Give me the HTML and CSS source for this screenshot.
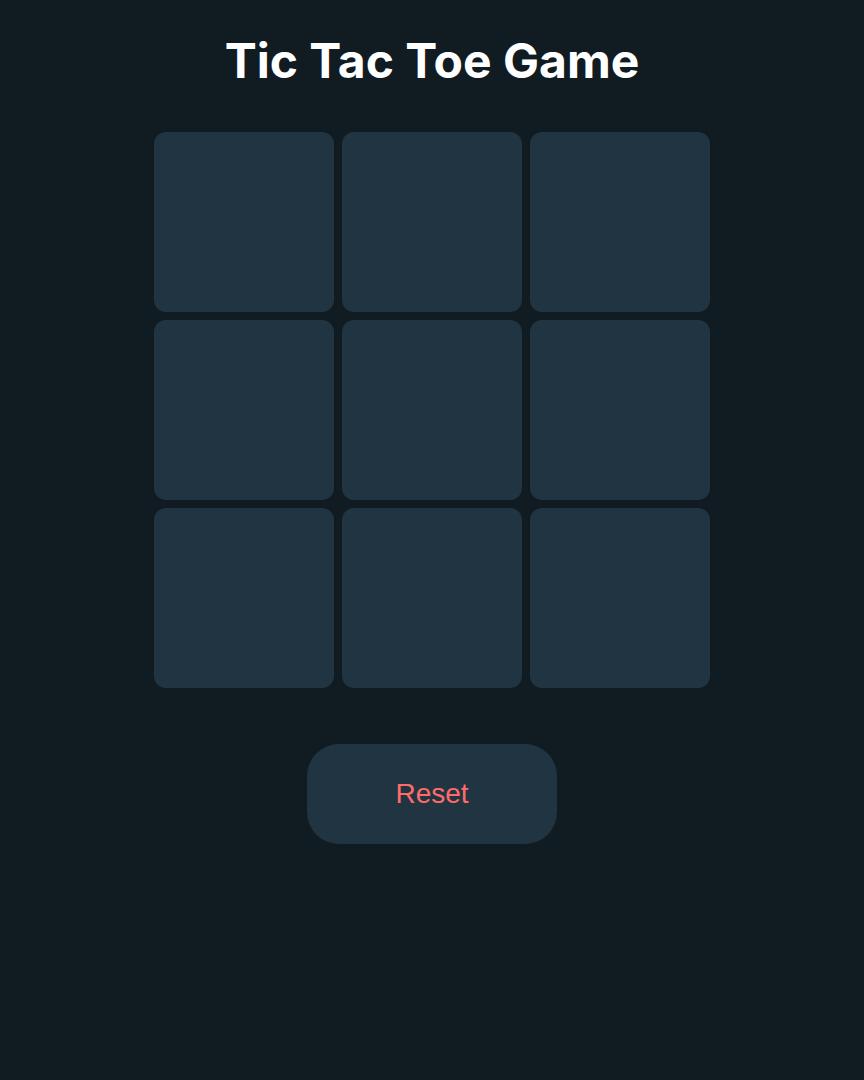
FILE: index.html
```html
<!DOCTYPE html>
<html lang="en">
<head>
<meta charset="utf-8">
<title>Tic Tac Toe Game</title>
<link rel="stylesheet" href="styles.css">
</head>
<body>
<main class="game">
  <h1 class="title">Tic Tac Toe Game</h1>
  <div class="board">
    <div class="cell"></div>
    <div class="cell"></div>
    <div class="cell"></div>
    <div class="cell"></div>
    <div class="cell"></div>
    <div class="cell"></div>
    <div class="cell"></div>
    <div class="cell"></div>
    <div class="cell"></div>
  </div>
  <button class="reset">Reset</button>
</main>
</body>
</html>
```
FILE: styles.css
```css
html, body {
  margin: 0;
  padding: 0;
  background: #111b22;
  height: 100%;
}
.game {
  display: flex;
  flex-direction: column;
  align-items: center;
  padding-top: 32px;
}
.title {
  margin: 0;
  font-family: Inter, "Liberation Sans", sans-serif;
  font-weight: 700;
  font-size: 48px;
  line-height: 58px;
  color: #ffffff;
}
.board {
  margin-top: 42px;
  display: grid;
  grid-template-columns: repeat(3, 180px);
  grid-auto-rows: 180px;
  gap: 8px;
}
.cell {
  background: #203541;
  border-radius: 12px;
}
.reset {
  margin-top: 56px;
  width: 250px;
  height: 100px;
  border: none;
  border-radius: 32px;
  background: #203541;
  color: #ff6b6b;
  font-family: "Liberation Sans", Arial, sans-serif;
  font-size: 28px;
  cursor: pointer;
}
```
